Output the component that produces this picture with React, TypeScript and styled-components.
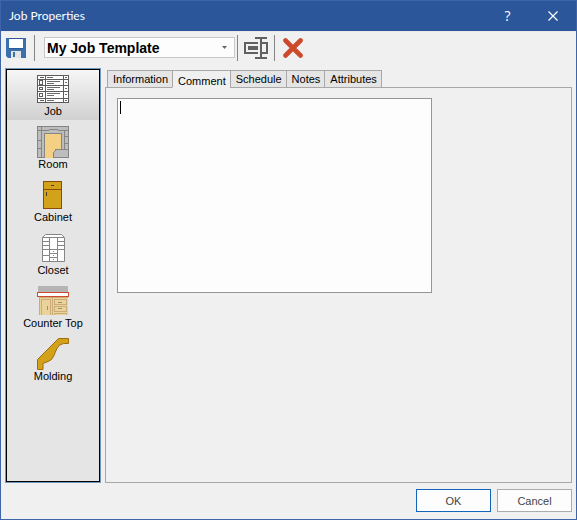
import React, { useState } from "react";
import styled, { createGlobalStyle } from "styled-components";

const GlobalStyle = createGlobalStyle`
  *, *::before, *::after { box-sizing: border-box; }
  body { margin: 0; background: #f0f0f0; }
  button, select, textarea { font: inherit; color: inherit; margin: 0; }
`;

const Dialog = styled.div`
  display: flex;
  flex-direction: column;
  min-height: 100vh;
  border: 1px solid #3e65a7;
  background: #f0f0f0;
  color: #000;
  font: 11px/12px "Liberation Sans", Arial, sans-serif;
`;

const TitleBar = styled.header`
  display: flex;
  align-items: center;
  height: 30px;
  padding: 0 1px 0 8px;
  background: #2b579a;
  color: #fff;
`;

const Title = styled.h1`
  flex: 1;
  margin: 0;
  font: 12px/16px Lato, "Open Sans", sans-serif;
`;

const CaptionButton = styled.button`
  display: flex;
  align-items: center;
  justify-content: center;
  width: 45px;
  height: 28px;
  padding: 0;
  border: 0;
  background: none;
  color: #fff;
  font: 14px/16px "Open Sans", "Noto Sans", sans-serif;
`;

const Toolbar = styled.div`
  display: flex;
  align-items: center;
  height: 34px;
  padding: 0 0 2px 5px;
  border-top: 1px solid #e9e9e9;
`;

const ToolButton = styled.button`
  display: flex;
  padding: 0;
  border: 0;
  background: none;
`;

const Divider = styled.span<{ $before: number; $after: number }>`
  width: 1px;
  height: 26px;
  margin: 0 ${(p) => p.$after}px 0 ${(p) => p.$before}px;
  background: #858585;
`;

const SelectBox = styled.div`
  position: relative;
  display: flex;
`;

const TemplateSelect = styled.select`
  appearance: none;
  width: 191px;
  height: 21px;
  padding: 0 20px 0 2px;
  border: 1px solid #c8c8c8;
  border-radius: 0;
  outline: 0;
  background: #fdfdfd;
  color: #000;
  font: bold 14px/18px "Liberation Sans", Arial, sans-serif;
`;

const SelectArrow = styled.svg`
  position: absolute;
  top: 9px;
  right: 8px;
  pointer-events: none;
`;

const Main = styled.main`
  display: flex;
  flex: 1;
  gap: 4px;
  padding: 3px 4px 0;
`;

const Sidebar = styled.nav`
  display: flex;
  flex-direction: column;
  gap: 3px;
  width: 96px;
  border: 1px solid #7199bd;
  padding: 1px;
  background: #e5e5e5;
  box-shadow: inset 0 0 0 1px #000;
`;

const NavItem = styled.button<{ $active: boolean }>`
  display: flex;
  flex-direction: column;
  align-items: center;
  height: 50px;
  padding: 3px 0;
  border: 0;
  background: ${(p) => (p.$active ? "linear-gradient(#f6f6f6, #d0d0d0)" : "none")};
`;

const Workspace = styled.section`
  display: flex;
  flex: 1;
  flex-direction: column;
  padding-top: 2px;
`;

const Tabs = styled.div`
  display: flex;
  padding-left: 2px;
`;

const Tab = styled.button<{ $active: boolean }>`
  position: relative;
  height: 18px;
  margin: 0 -1px -1px 0;
  padding: ${(p) => (p.$active ? "3px 4px 0 5px" : "0 4px 1px 5px")};
  border: 1px solid #a8a8a8;
  border-bottom-color: ${(p) => (p.$active ? "#f0f0f0" : "#a8a8a8")};
  background: ${(p) => (p.$active ? "#f0f0f0" : "#e5e5e5")};
  white-space: nowrap;
`;

const Panel = styled.div`
  flex: 1;
  padding: 10px 11px;
  border: 1px solid #a8a8a8;
`;

const Editor = styled.div`
  position: relative;
  display: flex;
  max-width: 315px;
`;

const CommentBox = styled.textarea`
  width: 100%;
  height: 195px;
  padding: 2px;
  border: 1px solid #969696;
  outline: 0;
  resize: none;
  background: #fdfdfd;
  caret-color: transparent;
`;

const Caret = styled.span`
  position: absolute;
  top: 3px;
  left: 3px;
  width: 1px;
  height: 13px;
  background: #000;
  pointer-events: none;
`;

const Footer = styled.footer`
  display: flex;
  justify-content: flex-end;
  gap: 6px;
  padding: 6px 4px 7px;
`;

const DialogButton = styled.button<{ $primary?: boolean }>`
  width: 75px;
  height: 23px;
  padding: 0;
  border: 1px solid ${(p) => (p.$primary ? "#1464b8" : "#acacac")};
  background: #fdfdfd;
  color: #444;
`;

const SaveIcon = () => (
  <svg width="20" height="20" viewBox="0 0 20 20" aria-hidden="true">
    <path d="M0 0h20v20H2l-2-2z" fill="#3a6fae" />
    <path d="M3 0h14v11H3z" fill="#2b579a" />
    <path d="M3 1h14v9H3z" fill="#fff" />
    <path d="M5 13h10v7H5z" fill="#e4e4e4" />
    <path d="M7 14h2v5H7z" fill="#3a6fae" />
  </svg>
);

const RenameIcon = () => (
  <svg width="24" height="22" viewBox="0 0 24 22" fill="none" stroke="#606060" strokeWidth="2" shapeRendering="crispEdges" aria-hidden="true">
    <path d="M14 6H1v10h13M18 6h5v10h-5M11 1h12M11 21h12M17 1v20" />
    <path d="M4 9h10v4H4z" fill="#606060" stroke="none" />
  </svg>
);

const DeleteIcon = () => (
  <svg width="20" height="20" viewBox="0 0 20 20" aria-hidden="true">
    <path d="M2.5 2.5l15 15M17.5 2.5l-15 15" stroke="#cd492c" strokeWidth="4.6" strokeLinecap="round" />
  </svg>
);

const NavIcon = ({ children }: { children: React.ReactNode }) => (
  <svg width="32" height="32" viewBox="0 0 32 32" fill="none" shapeRendering="crispEdges" aria-hidden="true">
    {children}
  </svg>
);

const JobIcon = () => (
  <NavIcon>
    <path d="M.5 2.5h31v27H.5z" fill="#fff" stroke="#5c5c5c" />
    <path d="M1 6.5h30M1 12.5h30M1 18.5h30M1 25.5h30M8.5 3v26M26.5 3v26" stroke="#5c5c5c" />
    <path d="M2.5 7.5h3v4h-3zM2.5 14.5h3v2h-3zM2.5 20.5h3v3h-3zM2.5 27.5h4M2.5 4.5h4" stroke="#5c5c5c" />
    <path d="M10 4.5h6M10 8.5h13M10 10.5h7M10 14.5h13M10 16.5h7M10 20.5h13M10 22.5h7M10 27.5h7M28 4.5h2M28 9.5h2M28 15.5h2M28 21.5h2M28 27.5h2" stroke="#6c6c6c" />
  </NavIcon>
);

const RoomIcon = () => (
  <NavIcon>
    <path d="M.5.5h31v31H.5z" fill="#bdbdbd" stroke="#858585" />
    <path d="M4.5 1v30M1 4.5h11M12 3.5h9M21 4.5h10M27.5 5v19M1 14.5h3M1 22.5h3M28 10.5h3M28 17.5h3" stroke="#858585" />
    <path d="M7.5 32V7.5h17v16H19l-2.5 3V32" fill="#f3d083" stroke="#858585" />
    <path d="M24 23.5h8" stroke="#858585" />
  </NavIcon>
);

const CabinetIcon = () => (
  <NavIcon>
    <path d="M6.5 2.5h18v27h-18zM6.5 10.5h18" fill="#d3a21b" stroke="#8a4d08" />
    <path d="M14 6.5h3M9.5 13v4" stroke="#4a3b20" />
  </NavIcon>
);

const ClosetIcon = () => (
  <NavIcon>
    <path d="M5.5 29.5v-24l3-3h16l3 3v24z" fill="#fff" stroke="#858585" shapeRendering="auto" />
    <path d="M6 5.5h21M12.5 5v24M20.5 5v24M6 9.5h6M6 13.5h6M6 17.5h21M6 23.5h6M21 9.5h6M21 13.5h6M13 21.5h7M13 25.5h7M16 19.5h1M16 23.5h1M16 27.5h1" stroke="#858585" />
  </NavIcon>
);

const CounterTopIcon = () => (
  <NavIcon>
    <path d="M1 1h30v6H1z" fill="#b5b5b5" />
    <path d="M.5 7.5h31v4H.5z" fill="#fff" stroke="#cf4b30" />
    <path d="M2 13h29v17H2z" fill="#e9d39a" />
    <path d="M1.5 12.5h29M2.5 13v17M4.5 30V14.5h9V30M15.5 13v17M17.5 14.5h12v5h-12zM17.5 21.5h12v5h-12zM17.5 30v-1.5h12V30" stroke="#cbab78" />
    <path d="M10.5 21v4M21 17.5h4M21 23.5h4" stroke="#9d9078" />
  </NavIcon>
);

const MoldingIcon = () => (
  <NavIcon>
    <path d="M21.5.5h10v5h-5q-5 1-6.500 5-2 4-3 7-2 5-6 6l-5 2v6H.5V21.500z" fill="#d3a21b" stroke="#a06c0c" shapeRendering="auto" />
  </NavIcon>
);

const sections = [
  { name: "Job", Icon: JobIcon },
  { name: "Room", Icon: RoomIcon },
  { name: "Cabinet", Icon: CabinetIcon },
  { name: "Closet", Icon: ClosetIcon },
  { name: "Counter Top", Icon: CounterTopIcon },
  { name: "Molding", Icon: MoldingIcon },
];

const tabs = ["Information", "Comment", "Schedule", "Notes", "Attributes"];

export default function App() {
  const [section, setSection] = useState("Job");
  const [tab, setTab] = useState("Comment");

  return (
    <>
      <GlobalStyle />
      <Dialog role="dialog" aria-labelledby="dialog-title">
        <TitleBar>
          <Title id="dialog-title">Job Properties</Title>
          <CaptionButton aria-label="Help">?</CaptionButton>
          <CaptionButton aria-label="Close">
            <svg width="10" height="10" viewBox="0 0 10 10" stroke="#fff" strokeWidth="1.2" aria-hidden="true">
              <path d="M.5.5l9 9M9.500.5l-9 9" />
            </svg>
          </CaptionButton>
        </TitleBar>
        <Toolbar role="toolbar">
          <ToolButton aria-label="Save template"><SaveIcon /></ToolButton>
          <Divider $before={8} $after={9} />
          <SelectBox>
            <TemplateSelect aria-label="Template">
              <option>My Job Template</option>
            </TemplateSelect>
            <SelectArrow width="5" height="3" viewBox="0 0 5 3" aria-hidden="true">
              <path d="M0 0h5L2.500 3z" fill="#666" />
            </SelectArrow>
          </SelectBox>
          <Divider $before={2} $after={6} />
          <ToolButton aria-label="Rename template"><RenameIcon /></ToolButton>
          <Divider $before={6} $after={8} />
          <ToolButton aria-label="Delete template"><DeleteIcon /></ToolButton>
        </Toolbar>
        <Main>
          <Sidebar aria-label="Sections">
            {sections.map(({ name, Icon }) => (
              <NavItem key={name} $active={section === name} onClick={() => setSection(name)}>
                <Icon />
                {name}
              </NavItem>
            ))}
          </Sidebar>
          <Workspace>
            <Tabs role="tablist">
              {tabs.map((name) => (
                <Tab key={name} role="tab" aria-selected={tab === name} $active={tab === name} onClick={() => setTab(name)}>
                  {name}
                </Tab>
              ))}
            </Tabs>
            <Panel role="tabpanel" aria-label={tab}>
              <Editor>
                <CommentBox aria-label="Comment" />
                <Caret />
              </Editor>
            </Panel>
          </Workspace>
        </Main>
        <Footer>
          <DialogButton $primary>OK</DialogButton>
          <DialogButton>Cancel</DialogButton>
        </Footer>
      </Dialog>
    </>
  );
}
